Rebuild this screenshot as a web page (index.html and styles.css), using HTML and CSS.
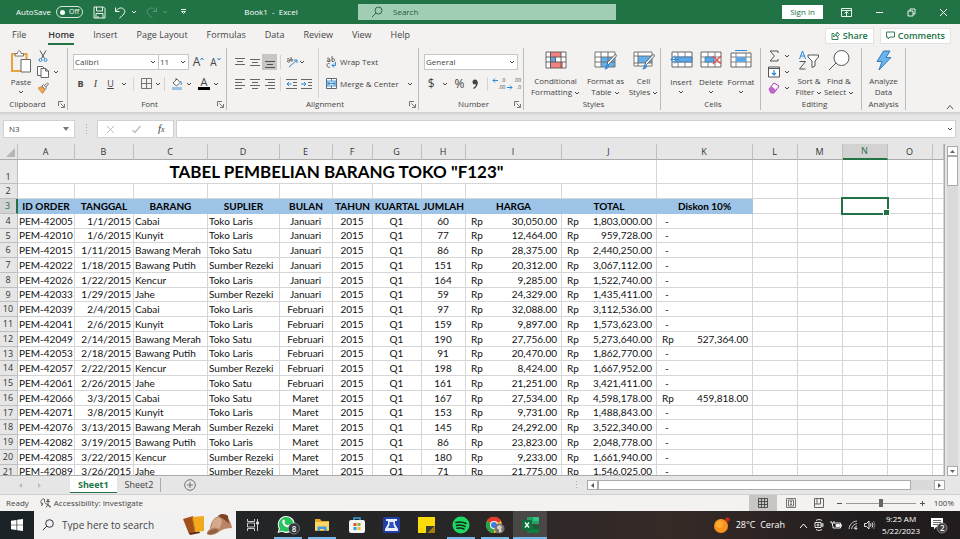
FILE: index.html
```html
<!DOCTYPE html>
<html lang="en">
<head>
<meta charset="utf-8">
<title>Book1 - Excel</title>
<link rel="stylesheet" href="styles.css">
</head>
<body>
<svg class="defs" aria-hidden="true">
  <symbol id="chev" viewBox="0 0 6 6"><path d="M1 2l2 2 2-2" fill="none" stroke="currentColor"/></symbol>
  <symbol id="launch" viewBox="0 0 7 7"><path d="M.5 5V.5H5M2.500 2.500L6 6M6.500 3v3.500H3" fill="none" stroke="#555" stroke-width=".8"/></symbol>
</svg>

<header class="titlebar">
  <div class="quick">
    <span class="autosave">AutoSave</span>
    <button class="toggle" aria-label="AutoSave off"><i></i>Off</button>
    <button class="q-save" aria-label="Save"><svg width="13" height="13" viewBox="0 0 13 13" fill="none" stroke="#fff" stroke-width=".9"><path d="M1 1h9.500L12 2.500V12H1zM3.500 1v4h6V1M3 12V7.500h7V12M5 10v2"/></svg></button>
    <button aria-label="Undo"><svg width="13" height="13" viewBox="0 0 13 13" fill="none" stroke="#fff"><path d="M1.500 1.500v4h4M1.500 5.500C4 2 7 1 9.500 3s1.500 5-4 9"/></svg></button>
    <svg class="c q-c"><use href="#chev"/></svg>
    <button class="dim" aria-label="Redo"><svg width="13" height="13" viewBox="0 0 13 13" fill="none" stroke="#fff"><path d="M11.500 1.500v4h-4M11.500 5.500C9 2 6 1 3.500 3S2 8 7.500 12"/></svg></button>
    <svg class="c dim"><use href="#chev"/></svg>
    <button class="q-more" aria-label="Customize"><svg width="7" height="6" viewBox="0 0 7 6" fill="none" stroke="#fff" stroke-width=".9"><path d="M1 .5h5M1.500 2.500l2 2 2-2z"/></svg></button>
    <h1>Book1&nbsp; -&nbsp; Excel</h1>
  </div>
  <label class="find"><svg width="12" height="12" viewBox="0 0 12 12" fill="none" stroke="#1e5c3a" stroke-width=".9"><circle cx="7.500" cy="4.500" r="3.500"/><path d="M5 7L1 11"/></svg><input type="text" placeholder="Search" aria-label="Search"></label>
  <div class="window">
    <button class="signin">Sign in</button>
    <button aria-label="Ribbon display"><svg width="11" height="9" viewBox="0 0 11 9" fill="none" stroke="#fff" stroke-width=".9"><path d="M.5.5h10v8H.5zM.5 2.500h10M5.500 8V4M3.500 5.500l2-2 2 2"/></svg></button>
    <button aria-label="Minimize"><svg width="9" height="9" viewBox="0 0 9 9" stroke="#fff"><path d="M1 4.500h7"/></svg></button>
    <button aria-label="Restore"><svg width="9" height="9" viewBox="0 0 9 9" fill="none" stroke="#fff" stroke-width=".9"><path d="M1 3h5v5H1zM3 3V1h5v5H6"/></svg></button>
    <button aria-label="Close"><svg width="9" height="9" viewBox="0 0 9 9" stroke="#fff"><path d="M1 1l7 7M8 1L1 8"/></svg></button>
  </div>
</header>

<nav class="tabs">
  <a href="#">File</a><a href="#" class="on">Home</a><a href="#">Insert</a><a href="#">Page Layout</a><a href="#">Formulas</a><a href="#">Data</a><a href="#">Review</a><a href="#">View</a><a href="#">Help</a>
  <button class="share"><svg width="9" height="9" viewBox="0 0 9 9" fill="none" stroke="#217346" stroke-width=".9"><path d="M3 2.500H1v6h6V6M2.500 6c0-2.500 1.500-3 3.500-3V1l2.500 2.500L6 6V4.500C4.500 4.500 3.500 4.500 2.500 6z"/></svg>Share</button>
  <button class="comments"><svg width="9" height="9" viewBox="0 0 9 9" fill="none" stroke="#217346" stroke-width=".9"><path d="M.5 1h8v5H4L2 8V6H.5z"/></svg>Comments</button>
</nav>

<section class="ribbon">
  <div class="group clip">
    <div class="body">
      <button class="big"><svg width="22" height="23" viewBox="0 0 22 23" fill="none"><path d="M5.500 4H2v17h9M14 4h2.500v5" stroke="#e8a33d" stroke-width="2"/><path d="M5 3.500h2.500C7.500 0 11 0 11 3.500h2.500V6H5z" fill="#fff" stroke="#666" stroke-width=".9"/><path d="M11 9.500h9.500V22H11z" fill="#fff" stroke="#666"/></svg><span>Paste</span><svg class="c"><use href="#chev"/></svg></button>
      <div class="stack">
        <button aria-label="Cut"><svg width="12" height="12" viewBox="0 0 12 12" fill="none"><path d="M3 .5l4.500 8M9 .5L4.500 8.500" stroke="#555"/><circle cx="3.500" cy="10" r="1.500" stroke="#2b88d8"/><circle cx="8.500" cy="10" r="1.500" stroke="#2b88d8"/></svg></button>
        <button aria-label="Copy"><svg width="12" height="12" viewBox="0 0 12 12" fill="#fff" stroke="#555" stroke-width=".9"><path d="M4 9.500H.5v-9h5L7 2M4 2.500h4.500L11.500 5v6.500H4zM8.500 2.500V5h3"/></svg><svg class="c"><use href="#chev"/></svg></button>
        <button aria-label="Format Painter"><svg width="12" height="12" viewBox="0 0 12 12"><path d="M1 6l4-1.500L8 8l-2.500 3.500z" fill="#f0a64a" stroke="#c97b1d" stroke-width=".7"/><path d="M5 4l1.500-1.500L9.500 6 8 7.500zM7.500 3.500L10.500 1l1 1-2.500 3" fill="#fff" stroke="#555" stroke-width=".8"/></svg></button>
      </div>
    </div>
    <h2>Clipboard</h2><svg class="l"><use href="#launch"/></svg>
  </div>

  <div class="group font">
    <div class="body rows">
      <div class="row">
        <span class="sel fname"><select aria-label="Font"><option>Calibri</option></select><svg class="c"><use href="#chev"/></svg></span><span class="sel fsize"><select aria-label="Font size"><option>11</option></select><svg class="c"><use href="#chev"/></svg></span>
        <button class="ib grow" aria-label="Increase font size">A<svg width="4" height="4" viewBox="0 0 4 4" fill="none" stroke="#2b88d8"><path d="M.5 3L2 1l1.500 2"/></svg></button>
        <button class="ib shrink" aria-label="Decrease font size">A<svg width="4" height="4" viewBox="0 0 4 4" fill="none" stroke="#2b88d8"><path d="M.5 1L2 3l1.500-2"/></svg></button>
      </div>
      <div class="row">
        <button class="ib"><b>B</b></button><button class="ib it"><i>I</i></button><button class="ib"><u>U</u></button><svg class="c m"><use href="#chev"/></svg><i class="sep"></i>
        <button class="ib w18" aria-label="Borders"><svg width="11" height="11" viewBox="0 0 11 11" fill="none" stroke="#666"><path d="M.5.5h10v10H.5zM5.500.5v10M.5 5.500h10" stroke-width=".9"/></svg></button><svg class="c"><use href="#chev"/></svg><i class="sep"></i>
        <button class="ib w18" aria-label="Fill"><svg width="12" height="12" viewBox="0 0 12 12"><path d="M1 9h10v3H1z" fill="#9dc3e6"/><path d="M2 5l4-4 3 3.500-3.500 3.500zM5 2V0" fill="#fff" stroke="#555" stroke-width=".9"/><path d="M9.500 3c1 1.500 1.500 3 0 4" stroke="#2b88d8" fill="none"/></svg></button><svg class="c"><use href="#chev"/></svg>
        <button class="ib w18 fc" aria-label="Font colour">A</button><svg class="c"><use href="#chev"/></svg>
      </div>
    </div>
    <h2>Font</h2><svg class="l"><use href="#launch"/></svg>
  </div>

  <div class="group align">
    <div class="body cols">
      <div class="rows">
        <div class="row">
          <button class="ib" aria-label="Top align"><svg width="10" height="12" viewBox="0 0 10 12" stroke="#555"><path d="M0 2.500h10M2 5.500h6M0 8.500h10" stroke-width=".9"/></svg></button><button class="ib" aria-label="Middle align"><svg width="10" height="12" viewBox="0 0 10 12" stroke="#555" stroke-width=".9"><path d="M0 3.500h10M2 6.500h6M0 9.500h10"/></svg></button><button class="ib pressed" aria-label="Bottom align"><svg width="10" height="12" viewBox="0 0 10 12" stroke="#444" stroke-width=".9"><path d="M0 5.500h10M2 8.500h6M0 11.500h10"/></svg></button><i class="sep"></i>
          <button class="ib" aria-label="Orientation"><svg width="12" height="12" viewBox="0 0 12 12" fill="none"><path d="M1 3c2-1 3 0 3 1.500S2 7 1.500 5.500 3 4 4 5M5 1v4c2 1 3-2 0-2" stroke="#555" stroke-width=".9"/><path d="M3 11l8-7M8 4h3v3" stroke="#2b88d8"/></svg></button><svg class="c"><use href="#chev"/></svg>
        </div>
        <div class="row">
          <button class="ib" aria-label="Align left"><svg width="10" height="10" viewBox="0 0 10 10" stroke="#555" stroke-width=".9"><path d="M0 .5h10M0 3.500h7M0 6.500h10M0 9.500h7"/></svg></button><button class="ib" aria-label="Centre"><svg width="10" height="10" viewBox="0 0 10 10" stroke="#555" stroke-width=".9"><path d="M0 .5h10M2 3.500h6M0 6.500h10M2 9.500h6"/></svg></button><button class="ib" aria-label="Align right"><svg width="10" height="10" viewBox="0 0 10 10" stroke="#555" stroke-width=".9"><path d="M0 .5h10M3 3.500h7M0 6.500h10M3 9.500h7"/></svg></button><i class="sep"></i>
          <button class="ib" aria-label="Decrease indent"><svg width="11" height="10" viewBox="0 0 11 10"><path d="M0 .5h11M7 3.500h4M7 6.500h4M0 9.500h11" stroke="#555" stroke-width=".9"/><path d="M5.500 5H1M3 3L1 5l2 2" stroke="#2b88d8" fill="none"/></svg></button><button class="ib" aria-label="Increase indent"><svg width="11" height="10" viewBox="0 0 11 10"><path d="M0 .5h11M7 3.500h4M7 6.500h4M0 9.500h11" stroke="#555" stroke-width=".9"/><path d="M0 5h5M3 3l2 2-2 2" stroke="#2b88d8" fill="none"/></svg></button>
        </div>
      </div>
      <i class="vsep"></i>
      <div class="rows">
        <div class="row"><button class="txt"><svg width="11" height="12" viewBox="0 0 11 12" fill="none"><path d="M1 2.500c2-1 3 0 3 3H2c-1.500 0-1.500-2 2-1.500M6 0v5.500c3.500 1 3.500-4 0-2.500M4 8C2 6.500 1 8 1 9.500S3 12 4 11" stroke="#555" stroke-width=".9"/><path d="M9.500 6v3.500H6M8 7.500l-2 2 2 2" stroke="#2b88d8"/></svg>Wrap Text</button></div>
        <div class="row"><button class="txt"><svg width="11" height="11" viewBox="0 0 11 11"><path d="M.5.5h10v10H.5z" fill="#fff" stroke="#555" stroke-width=".9"/><path d="M1 3h9v5H1z" fill="#cfe6f8" stroke="#2b88d8" stroke-width=".8"/><path d="M2 5.500h7M3.500 4L2 5.500 3.500 7M7.500 4L9 5.500 7.500 7M5.500 0v3M5.500 8v3" stroke="#2b6ea8" stroke-width=".8" fill="none"/></svg>Merge &amp; Center</button><svg class="c m2"><use href="#chev"/></svg></div>
      </div>
    </div>
    <h2>Alignment</h2><svg class="l"><use href="#launch"/></svg>
  </div>

  <div class="group number">
    <div class="body rows">
      <div class="row"><span class="sel fmt"><select aria-label="Number format"><option>General</option></select><svg class="c"><use href="#chev"/></svg></span></div>
      <div class="row">
        <button class="ib sym">$</button><svg class="c m"><use href="#chev"/></svg><button class="ib sym w18">%</button><button class="ib" aria-label="Comma style"><svg width="6" height="10" viewBox="0 0 6 10"><circle cx="3" cy="3" r="2.500" fill="#444"/><path d="M5 3c.5 3-1 5-3.500 6.500" stroke="#444" fill="none" stroke-width="1.300"/></svg></button><i class="sep"></i>
        <button class="ib dec" aria-label="Increase decimal"><span>.0</span><span>.00</span><svg width="6" height="5" viewBox="0 0 6 5" fill="none" stroke="#2b88d8"><path d="M6 2.500H1M3 .5l-2 2 2 2"/></svg></button><button class="ib dec r" aria-label="Decrease decimal"><span>.00</span><span>.0</span><svg width="6" height="5" viewBox="0 0 6 5" fill="none" stroke="#2b88d8"><path d="M0 2.500h5M3 .5l2 2-2 2"/></svg></button>
      </div>
    </div>
    <h2>Number</h2><svg class="l"><use href="#launch"/></svg>
  </div>

  <div class="group styles">
    <div class="body">
      <button class="big w54"><svg width="22" height="20" viewBox="0 0 22 20"><path d="M1 2h20v16H1z" fill="#fff"/><path d="M5 2h11v5H5zM5 12h13v6H5z" fill="#f4817e"/><path d="M5 7h5v5H5z" fill="#5ea7e5"/><path d="M1 2h20v16H1zM1 7h20M1 12h20M5.500 2v16M10.500 7v5M16 2v16" fill="none" stroke="#555" stroke-width=".9"/></svg><span>Conditional<br>Formatting <svg class="c"><use href="#chev"/></svg></span></button>
      <button class="big w42"><svg width="23" height="20" viewBox="0 0 23 20"><path d="M1 2h20v15H1z" fill="#fff"/><path d="M7 7h14v10H7z" fill="#62b0ec"/><path d="M1 2h20v15H1zM1 7h20M1 12h20M7 2v15M14 2v15" fill="none" stroke="#666" stroke-width=".9"/><path d="M21.500 4L13 13l1.500 1.500L22.500 6z" fill="#fff" stroke="#555" stroke-width=".9"/><path d="M10 19c2 0 1-4 3-5l2 1.500c.5 2-2 4.500-5 3.500z" fill="#3d8fd6"/></svg><span>Format as<br>Table <svg class="c"><use href="#chev"/></svg></span></button>
      <button class="big w30"><svg width="22" height="20" viewBox="0 0 22 20"><path d="M1 2h18v14H1z" fill="#fff"/><path d="M5 6h14v7H5z" fill="#62b0ec"/><path d="M1 2h18v14H1zM1 6h18M1 13h18M5 2v14" fill="none" stroke="#666" stroke-width=".9"/><path d="M20.500 4L12 13l1.500 1.500L21.500 6z" fill="#fff" stroke="#555" stroke-width=".9"/><path d="M9 19c2 0 1-4 3-5l2 1.500c.5 2-2 4.500-5 3.500z" fill="#3d8fd6"/></svg><span>Cell<br>Styles <svg class="c"><use href="#chev"/></svg></span></button>
    </div>
    <h2>Styles</h2>
  </div>

  <div class="group cells">
    <div class="body">
      <button class="big w30"><svg width="23" height="20" viewBox="0 0 23 20"><path d="M2 2h20v15H2z" fill="#fff" stroke="#555" stroke-width=".9"/><path d="M2 7h20M2 12h20M8 2v15M15 2v15" stroke="#777" stroke-width=".9"/><path d="M5 7h17v5H5z" fill="#5ea7e5" stroke="#2b6ea8" stroke-width=".7"/><path d="M1 9.500h8M5 5.500l-4 4 4 4" stroke="#2b88d8" fill="none"/></svg><span>Insert</span><svg class="c"><use href="#chev"/></svg></button>
      <button class="big w30"><svg width="23" height="20" viewBox="0 0 23 20"><path d="M1 2h20v15H1z" fill="#fff" stroke="#555" stroke-width=".9"/><path d="M1 7h20M1 12h20M8 2v15M15 2v15" stroke="#777" stroke-width=".9"/><path d="M5 7h9v5H5z" fill="#5ea7e5" stroke="#2b6ea8" stroke-width=".7"/><path d="M13 6l8 8M21 6l-8 8" stroke="#e8504c" stroke-width="1.300"/></svg><span>Delete</span><svg class="c"><use href="#chev"/></svg></button>
      <button class="big w30"><svg width="22" height="20" viewBox="0 0 22 20"><path d="M1 3h20v14H1z" fill="#fff" stroke="#555" stroke-width=".9"/><path d="M1 7h20M1 12h20M6 3v14M16 3v14" stroke="#777" stroke-width=".9"/><path d="M6 7h10v5H6z" fill="#5ea7e5"/><path d="M5 .5h12" stroke="#2b88d8"/></svg><span>Format</span><svg class="c"><use href="#chev"/></svg></button>
    </div>
    <h2>Cells</h2>
  </div>

  <div class="group editing">
    <div class="body">
      <div class="stack">
        <button aria-label="AutoSum"><svg width="12" height="12" viewBox="0 0 12 12" fill="none" stroke="#555"><path d="M10 3V1H2l4.500 5L2 11h8V9"/></svg><svg class="c"><use href="#chev"/></svg></button>
        <button aria-label="Fill down"><svg width="12" height="12" viewBox="0 0 12 12" fill="none"><path d="M.5 1h11v10H.5z" fill="#fff" stroke="#555"/><path d="M1 2.500h10" stroke="#555"/><path d="M6 4v5M4 7l2 2 2-2" stroke="#2b88d8" stroke-width="1.200"/></svg><svg class="c"><use href="#chev"/></svg></button>
        <button aria-label="Clear"><svg width="12" height="12" viewBox="0 0 12 12"><path d="M1 7l5-6 5 3-5 7H3z" fill="#fff" stroke="#a63bb5"/><path d="M1 7l2.500-3L8 8l-2 3H3z" fill="#c266cf"/></svg><svg class="c"><use href="#chev"/></svg></button>
      </div>
      <button class="big w30"><svg width="22" height="20" viewBox="0 0 22 20" fill="none"><path d="M1.500 9L4.500 1l3 8M2.500 6h4" stroke="#2b88d8"/><path d="M1.500 11.500h6l-6 7.500h6" stroke="#555"/><path d="M10 5h10.500v2L17 11v5l-3 1.500V11l-4-4z" fill="#fff" stroke="#555"/></svg><span>Sort &amp;<br>Filter <svg class="c"><use href="#chev"/></svg></span></button>
      <button class="big w30"><svg width="22" height="22" viewBox="0 0 22 22" fill="none" stroke="#555"><circle cx="13.500" cy="8" r="7.500" fill="#fff"/><path d="M8 13l-7 7"/></svg><span>Find &amp;<br>Select <svg class="c"><use href="#chev"/></svg></span></button>
    </div>
    <h2>Editing</h2>
  </div>

  <div class="group analysis">
    <div class="body"><button class="big w42"><svg width="16" height="21" viewBox="0 0 16 21"><path d="M7.500 1H14l-4 6.500h5L3 20l3-8.500H1z" fill="#6bb4ee" stroke="#2671b8" stroke-width=".9"/></svg><span>Analyze<br>Data</span></button></div>
    <h2>Analysis</h2>
  </div>
  <button class="collapse" aria-label="Collapse ribbon"><svg width="8" height="6" viewBox="0 0 8 6" fill="none" stroke="#555"><path d="M1 5l3-3.500L7 5"/></svg></button>
</section>

<section class="formula">
  <span class="namebox"><input type="text" value="N3" aria-label="Name box"><svg width="6" height="4" viewBox="0 0 6 4"><path d="M0 0h6L3 4z" fill="#777"/></svg></span>
  <svg class="dots" width="3" height="10" viewBox="0 0 3 10" fill="#aaa"><path d="M1 0h1v1H1zM1 3h1v1H1zM1 6h1v1H1zM1 9h1v1H1z"/></svg>
  <div class="fx">
    <button aria-label="Cancel"><svg width="9" height="9" viewBox="0 0 9 9" stroke="#bbb"><path d="M1 1l7 7M8 1L1 8"/></svg></button>
    <button aria-label="Enter"><svg width="9" height="9" viewBox="0 0 9 9" stroke="#bbb" fill="none" stroke-width="1.300"><path d="M.5 5L3 7.500 8.500 1"/></svg></button>
    <button aria-label="Insert function"><i>f<small>x</small></i></button>
  </div>
  <span class="entry"><input type="text" aria-label="Formula"><svg class="c"><use href="#chev"/></svg></span>
</section>

<main class="work">
<div class="grid">
<table>
<colgroup><col class="cr"><col class="ca"><col class="cb"><col class="cc"><col class="cd"><col class="ce"><col class="cf"><col class="cg"><col class="ch"><col class="ci"><col class="cj"><col class="ck"><col class="cl"><col class="cl"><col class="cl"><col class="cl"><col></colgroup>
<thead><tr><th class="corner"><svg width="9" height="9" viewBox="0 0 9 9"><path d="M9 0v9H0z" fill="#b5b5b5"/></svg></th><th>A<th>B<th>C<th>D<th>E<th>F<th>G<th>H<th>I<th>J<th>K<th>L<th>M<th class="on">N<th>O<th></tr></thead>
<tbody>
<tr class="title"><th>1<td colspan="10">TABEL PEMBELIAN BARANG TOKO "F123"<td><td><td><td><td><td></tr>
<tr><th>2<td><td><td><td><td><td><td><td><td><td><td><td><td><td><td><td></tr>
<tr class="head"><th>3<td>ID ORDER<td>TANGGAL<td>BARANG<td>SUPLIER<td>BULAN<td>TAHUN<td>KUARTAL<td>JUMLAH<td>HARGA<td>TOTAL<td>Diskon 10%<td><td><td class="cursor"><td><td></tr>
<tr><th>4<td>PEM-42005<td>1/1/2015<td>Cabai<td>Toko Laris<td>Januari<td>2015<td>Q1<td>60<td><p>Rp<span>30,050.00</span></p><td><p>Rp<span>1,803,000.00</span></p><td><p class="nil">-</p><td><td><td><td><td></tr>
<tr><th>5<td>PEM-42010<td>1/6/2015<td>Kunyit<td>Toko Laris<td>Januari<td>2015<td>Q1<td>77<td><p>Rp<span>12,464.00</span></p><td><p>Rp<span>959,728.00</span></p><td><p class="nil">-</p><td><td><td><td><td></tr>
<tr><th>6<td>PEM-42015<td>1/11/2015<td>Bawang Merah<td>Toko Satu<td>Januari<td>2015<td>Q1<td>86<td><p>Rp<span>28,375.00</span></p><td><p>Rp<span>2,440,250.00</span></p><td><p class="nil">-</p><td><td><td><td><td></tr>
<tr><th>7<td>PEM-42022<td>1/18/2015<td>Bawang Putih<td>Sumber Rezeki<td>Januari<td>2015<td>Q1<td>151<td><p>Rp<span>20,312.00</span></p><td><p>Rp<span>3,067,112.00</span></p><td><p class="nil">-</p><td><td><td><td><td></tr>
<tr><th>8<td>PEM-42026<td>1/22/2015<td>Kencur<td>Toko Laris<td>Januari<td>2015<td>Q1<td>164<td><p>Rp<span>9,285.00</span></p><td><p>Rp<span>1,522,740.00</span></p><td><p class="nil">-</p><td><td><td><td><td></tr>
<tr><th>9<td>PEM-42033<td>1/29/2015<td>Jahe<td>Sumber Rezeki<td>Januari<td>2015<td>Q1<td>59<td><p>Rp<span>24,329.00</span></p><td><p>Rp<span>1,435,411.00</span></p><td><p class="nil">-</p><td><td><td><td><td></tr>
<tr><th>10<td>PEM-42039<td>2/4/2015<td>Cabai<td>Toko Laris<td>Februari<td>2015<td>Q1<td>97<td><p>Rp<span>32,088.00</span></p><td><p>Rp<span>3,112,536.00</span></p><td><p class="nil">-</p><td><td><td><td><td></tr>
<tr><th>11<td>PEM-42041<td>2/6/2015<td>Kunyit<td>Toko Laris<td>Februari<td>2015<td>Q1<td>159<td><p>Rp<span>9,897.00</span></p><td><p>Rp<span>1,573,623.00</span></p><td><p class="nil">-</p><td><td><td><td><td></tr>
<tr><th>12<td>PEM-42049<td>2/14/2015<td>Bawang Merah<td>Toko Satu<td>Februari<td>2015<td>Q1<td>190<td><p>Rp<span>27,756.00</span></p><td><p>Rp<span>5,273,640.00</span></p><td><p>Rp<span>527,364.00</span></p><td><td><td><td><td></tr>
<tr><th>13<td>PEM-42053<td>2/18/2015<td>Bawang Putih<td>Toko Laris<td>Februari<td>2015<td>Q1<td>91<td><p>Rp<span>20,470.00</span></p><td><p>Rp<span>1,862,770.00</span></p><td><p class="nil">-</p><td><td><td><td><td></tr>
<tr><th>14<td>PEM-42057<td>2/22/2015<td>Kencur<td>Sumber Rezeki<td>Februari<td>2015<td>Q1<td>198<td><p>Rp<span>8,424.00</span></p><td><p>Rp<span>1,667,952.00</span></p><td><p class="nil">-</p><td><td><td><td><td></tr>
<tr><th>15<td>PEM-42061<td>2/26/2015<td>Jahe<td>Toko Satu<td>Februari<td>2015<td>Q1<td>161<td><p>Rp<span>21,251.00</span></p><td><p>Rp<span>3,421,411.00</span></p><td><p class="nil">-</p><td><td><td><td><td></tr>
<tr><th>16<td>PEM-42066<td>3/3/2015<td>Cabai<td>Toko Satu<td>Maret<td>2015<td>Q1<td>167<td><p>Rp<span>27,534.00</span></p><td><p>Rp<span>4,598,178.00</span></p><td><p>Rp<span>459,818.00</span></p><td><td><td><td><td></tr>
<tr><th>17<td>PEM-42071<td>3/8/2015<td>Kunyit<td>Toko Laris<td>Maret<td>2015<td>Q1<td>153<td><p>Rp<span>9,731.00</span></p><td><p>Rp<span>1,488,843.00</span></p><td><p class="nil">-</p><td><td><td><td><td></tr>
<tr><th>18<td>PEM-42076<td>3/13/2015<td>Bawang Merah<td>Sumber Rezeki<td>Maret<td>2015<td>Q1<td>145<td><p>Rp<span>24,292.00</span></p><td><p>Rp<span>3,522,340.00</span></p><td><p class="nil">-</p><td><td><td><td><td></tr>
<tr><th>19<td>PEM-42082<td>3/19/2015<td>Bawang Putih<td>Toko Laris<td>Maret<td>2015<td>Q1<td>86<td><p>Rp<span>23,823.00</span></p><td><p>Rp<span>2,048,778.00</span></p><td><p class="nil">-</p><td><td><td><td><td></tr>
<tr><th>20<td>PEM-42085<td>3/22/2015<td>Kencur<td>Sumber Rezeki<td>Maret<td>2015<td>Q1<td>180<td><p>Rp<span>9,233.00</span></p><td><p>Rp<span>1,661,940.00</span></p><td><p class="nil">-</p><td><td><td><td><td></tr>
<tr><th>21<td>PEM-42089<td>3/26/2015<td>Jahe<td>Sumber Rezeki<td>Maret<td>2015<td>Q1<td>71<td><p>Rp<span>21,775.00</span></p><td><p>Rp<span>1,546,025.00</span></p><td><p class="nil">-</p><td><td><td><td><td></tr>
</tbody>
</table>
</div>
<div class="vscroll">
  <button aria-label="Scroll up"><svg width="5" height="3" viewBox="0 0 5 3"><path d="M0 3h5L2.500 0z" fill="#666"/></svg></button>
  <div class="track"><i></i></div>
  <button aria-label="Scroll down"><svg width="5" height="3" viewBox="0 0 5 3"><path d="M0 0h5L2.500 3z" fill="#666"/></svg></button>
</div>
</main>

<nav class="sheets">
  <button class="arr" aria-label="Previous sheet"><svg width="3" height="5" viewBox="0 0 3 5"><path d="M3 0v5L0 2.500z" fill="#bbb"/></svg></button>
  <button class="arr" aria-label="Next sheet"><svg width="3" height="5" viewBox="0 0 3 5"><path d="M0 0v5l3-2.500z" fill="#bbb"/></svg></button>
  <a href="#" class="on">Sheet1</a><a href="#" class="off">Sheet2</a><i class="sep"></i>
  <button class="add" aria-label="New sheet"><svg width="12" height="12" viewBox="0 0 12 12" fill="none" stroke="#666" stroke-width=".9"><circle cx="6" cy="6" r="5.300"/><path d="M6 3v6M3 6h6"/></svg></button>
  <svg class="dots" width="3" height="10" viewBox="0 0 3 10" fill="#aaa"><path d="M1 1h1v1H1zM1 4h1v1H1zM1 7h1v1H1z"/></svg>
  <div class="hscroll">
    <button aria-label="Scroll left"><svg width="3" height="5" viewBox="0 0 3 5"><path d="M3 0v5L0 2.500z" fill="#555"/></svg></button>
    <div class="track"><i></i></div>
    <button aria-label="Scroll right"><svg width="3" height="5" viewBox="0 0 3 5"><path d="M0 0v5l3-2.500z" fill="#555"/></svg></button>
  </div>
</nav>

<footer class="status">
  <span class="ready">Ready</span>
  <svg width="11" height="10" viewBox="0 0 11 10" fill="none" stroke="#555" stroke-width=".9"><path d="M4 .5C1.500 1 .5 3 1 5l1.500 2M1 7.500l1.500-.5V5M4.500 1v3.500M6 3.500h4M8 3.500v3L6 9.500M8 6.500l2 3M5 5l6 4"/><circle cx="8" cy="2" r=".8"/></svg>
  <span>Accessibility: Investigate</span>
  <div class="views">
    <button class="pressed" aria-label="Normal"><svg width="10" height="10" viewBox="0 0 10 10" fill="none" stroke="#444" stroke-width=".9"><path d="M.5.5h9v9h-9zM3.500.5v9M6.500.5v9M.5 3.500h9M.5 6.500h9"/></svg></button>
    <button aria-label="Page layout"><svg width="10" height="10" viewBox="0 0 10 10" fill="none" stroke="#555" stroke-width=".8"><path d="M.5.5h9v9h-9zM2.500 2h5v6h-5zM4 3.500h2M4 5h2M4 6.500h2"/></svg></button>
    <button aria-label="Page break preview"><svg width="10" height="10" viewBox="0 0 10 10" fill="none" stroke="#555" stroke-width=".9"><path d="M.5.5h9v9h-9zM3 .5V6h3.500V.5M.5 6H3"/></svg></button>
  </div>
  <button class="step" aria-label="Zoom out"><svg width="7" height="7" viewBox="0 0 7 7" stroke="#555"><path d="M1 3.500h5"/></svg></button>
  <input type="range" aria-label="Zoom" value="50">
  <button class="step" aria-label="Zoom in"><svg width="7" height="7" viewBox="0 0 7 7" stroke="#555"><path d="M1 3.500h5M3.500 1v5"/></svg></button>
  <span class="pct">100%</span>
</footer>

<footer class="taskbar">
  <button class="start" aria-label="Start"><svg width="12" height="12" viewBox="0 0 12 12" fill="#fff"><path d="M0 1.700l5.500-.8v4.800H0zM6.200.8L12 0v5.700H6.200zM0 6.300h5.500v4.800L0 10.300zM6.200 6.300H12V12l-5.800-.8z"/></svg></button>
  <label class="tsearch"><svg width="12" height="12" viewBox="0 0 12 12" fill="none" stroke="#333"><circle cx="7.500" cy="4.500" r="3.800"/><path d="M4.800 7.200L.8 11.200"/></svg><input type="text" placeholder="Type here to search" aria-label="Type here to search">
    <svg width="52" height="24" viewBox="0 0 52 24"><path d="M1 6l10-3 5 14-9 4z" fill="#a3501b"/><path d="M7 20l10-2 1 2-10 2z" fill="#5c2c10"/><path d="M10 4l12-1v15l-9 1z" fill="#f2a91e"/><path d="M10 4l3 15" stroke="#b96a12"/><path d="M28 16C29 7 34 2 41 3c6 1 8 6 9 12-5 0-9 1-12 3-4 4-11 5-13 3 0-2 1-4 3-5z" fill="#b98566"/><path d="M36 3c3-3 8-2 10 0l1 8c-3-4-6-5-11-8z" fill="#7d4526"/><path d="M31 8c3-4 8-5 9 0-1 5-2 7-3 8-3-2-5-2-8 0z" fill="#d5a98b"/><path d="M25 20c4-4 8-5 12-3-3 4-9 6-12 3z" fill="#93603f"/></svg>
  </label>
  <div class="apps">
    <button aria-label="Task view"><svg width="12" height="12" viewBox="0 0 12 12" fill="none" stroke="#ddd" stroke-width=".9"><path d="M.5 0v2.500h7V0M.5 4h7v4h-7zM.5 12V9.500h7V12M10.500 0v12"/><path d="M9.500 3h2v2h-2z" fill="#ddd"/></svg></button>
    <button class="run" aria-label="WhatsApp"><svg width="24" height="22" viewBox="0 0 24 22"><path d="M1.500 19l1.300-4.500A8.500 8.500 0 1 1 6 17.800z" fill="#fff"/><path d="M3 17.600l.9-3.300A7.400 7.400 0 1 1 6.500 16.800z" fill="#28c35a"/><path d="M7 6c1-1 1.500 0 2 1.300.2.700-.8 1-.6 1.500.7 1.300 1.700 2.200 3 2.700.6 0 .8-1.200 1.500-1 1.300.6 2 .8 1.200 2-2 2.200-7-.5-7.800-4-.2-1 .2-2 .7-2.500z" fill="#fff"/><circle cx="18" cy="14.500" r="5.500" fill="#30353a" stroke="#999" stroke-width=".7"/></svg><em>8</em></button>
    <button class="run" aria-label="File Explorer"><svg width="16" height="14" viewBox="0 0 16 14"><path d="M1 1h5l1.500 2H15v10H1z" fill="#e8a82c"/><path d="M1 4h14v8H1z" fill="#fcd667"/><path d="M3.500 13V8.500h9V13h-2.500v-2H6v2z" fill="#3f9bdc"/></svg></button>
    <button aria-label="Microsoft Store"><svg width="18" height="18" viewBox="0 0 18 18"><path d="M6 5V2h6v3" fill="none" stroke="#3aa0e0" stroke-width="1.500"/><rect x="1" y="4" width="16" height="13" rx="2" fill="#f3f3f3"/><path d="M5.500 7h3v3h-3z" fill="#e74f2c"/><path d="M9.500 7h3v3h-3z" fill="#7db52b"/><path d="M5.500 11h3v3h-3z" fill="#2a9fdc"/><path d="M9.500 11h3v3h-3z" fill="#f5b81c"/></svg></button>
    <button aria-label="Scanner"><svg width="17" height="16" viewBox="0 0 17 16"><rect width="17" height="16" rx="2" fill="#2340a8"/><path d="M3 2h11v2h-2v3l3 5v2H2v-2l3-5V4H3z" fill="#e8edfa"/><path d="M6.500 5h4v3l1.500 3h-7l1.500-3z" fill="#2c52c0"/></svg></button>
    <button aria-label="Sticky Notes"><svg width="17" height="16" viewBox="0 0 17 16"><path d="M0 0h17v16H0z" fill="#fddb0a"/><path d="M8 9h9l-7 7H8z" fill="#3b3a35"/><path d="M17 9v7h-7z" fill="#a37f08"/></svg></button>
    <button class="run" aria-label="Spotify"><svg width="18" height="18" viewBox="0 0 18 18"><circle cx="9" cy="9" r="8.500" fill="#1ed760"/><path d="M4 6.500c4-1 7-.7 10 1M4.500 9.500c3-.8 6-.5 8.500 1M5 12.300c2.500-.6 4.800-.4 7 .8" fill="none" stroke="#17231b" stroke-width="1.500" stroke-linecap="round"/></svg></button>
    <button class="run" aria-label="Chrome"><svg width="20" height="18" viewBox="0 0 20 18"><circle cx="9" cy="9" r="8" fill="#fbc116"/><path d="M9 9L2 5a8 8 0 0 1 14 0z" fill="#e33b2e"/><path d="M9 9L9 17A8 8 0 0 1 2 5z" fill="#2aa14b"/><circle cx="9" cy="9" r="4" fill="#fff"/><circle cx="9" cy="9" r="3" fill="#3b7de0"/><circle cx="14.500" cy="12.500" r="5" fill="#77736f"/><path d="M12 10.500l3-1.500 2 2-1 2 1 2.500-3 1v-3l-2-1z" fill="#d8d2cb"/></svg></button>
    <button class="run active" aria-label="Excel"><svg width="17" height="16" viewBox="0 0 17 16"><path d="M5 0h11q1 0 1 1v6H5z" fill="#21a366"/><path d="M11 0h5q1 0 1 1v3h-6z" fill="#33c481"/><path d="M5 8h12v7q0 1-1 1H5z" fill="#107c41"/><path d="M11 8h6v4h-6z" fill="#185c37"/><rect y="3" width="10" height="10" rx="1" fill="#0f703b"/><path d="M3 5.500l4 5M7 5.500l-4 5" stroke="#fff" stroke-width="1.300"/></svg></button>
  </div>
  <div class="tray">
    <svg width="16" height="16" viewBox="0 0 16 16"><circle cx="7" cy="9" r="7" fill="#f7931e"/><circle cx="5.500" cy="7.500" r="3.500" fill="#fbab33"/><circle cx="13.500" cy="2.500" r="2.200" fill="#c42b1c"/></svg>
    <span class="weather">28°C&nbsp; Cerah</span>
    <svg width="9" height="7" viewBox="0 0 9 7" fill="none" stroke="#fff"><path d="M1 6l3.500-4L8 6"/></svg>
    <svg width="10" height="12" viewBox="0 0 10 12" fill="none" stroke="#fff" stroke-width=".9"><path d="M2 1.500C4 .3 6 .3 8 1.500M2 10.500c2 1.200 4 1.200 6 0M1 3.500h6v5H1zM7 5.500l2-1v3l-2-1"/><circle cx="4" cy="6" r="1"/></svg>
    <svg width="12" height="10" viewBox="0 0 12 10" fill="none" stroke="#fff" stroke-width=".9"><path d="M4 3h6.500v5H3V6M11.500 4.500v2M1 1v2h3V1M2.500 3v3"/><path d="M6 4.500h3.500v2H6z" fill="#fff"/></svg>
    <svg width="10" height="10" viewBox="0 0 10 10" fill="none" stroke="#ddd" stroke-width=".9"><path d="M1 9C1.500 4.500 4.500 1.500 9 1M3.500 9C4 6 6 4 9 3.500M6 9c.3-1.500 1.500-2.700 3-3"/><circle cx="8" cy="8.500" r=".8" fill="#fff"/></svg>
    <svg width="12" height="10" viewBox="0 0 12 10" fill="none" stroke="#fff" stroke-width=".9"><path d="M.5 3.500h2L5 1v8L2.500 6.500h-2zM6.500 3.500q1 1.500 0 3M8 2.500q2 2.500 0 5"/><path d="M9.500 1q3 4 0 8" stroke="#888"/></svg>
    <time>9:25 AM<br>5/22/2023</time>
    <button class="notif" aria-label="Notifications"><svg width="18" height="17" viewBox="0 0 18 17"><path d="M1 1h12v9H6l-2 2.500V10H1z" fill="#fff"/><path d="M3 3.500h8M3 5.500h8M3 7.500h5" stroke="#444" stroke-width=".8"/><circle cx="12" cy="11" r="5" fill="#403b3a" stroke="#aaa" stroke-width=".7"/></svg><em>2</em></button>
  </div>
</footer>
</body>
</html>
```

FILE: styles.css
```css
* { box-sizing: border-box; }
body { margin: 0; height: 100vh; display: flex; flex-direction: column; overflow: hidden; background: #e6e6e6; color: #444; font: 9px/12px "Open Sans", "Noto Sans", sans-serif; }
button, input, select { font: inherit; color: inherit; border: 0; padding: 0; margin: 0; background: none; outline: 0; border-radius: 0; }
a { color: inherit; text-decoration: none; }
button { display: flex; align-items: center; justify-content: center; white-space: nowrap; }
svg { display: block; flex: none; }
h1, h2, p { margin: 0; font-weight: 400; font-size: inherit; }
.defs { position: absolute; width: 0; height: 0; }
.c { width: 6px; height: 6px; }

/* title bar */
.titlebar { flex: none; height: 24px; display: flex; align-items: center; background: #217346; color: #fff; }
.quick { flex: 0 0 358px; display: flex; align-items: center; padding-left: 16px; font-size: 8px; }
.toggle { width: 27px; height: 12px; margin: 0 10px 0 5px; border: 1px solid #d5e6dc; border-radius: 6px; font-size: 7px; gap: 4px; justify-content: flex-start; padding-left: 3px; }
.toggle i { width: 5px; height: 5px; border-radius: 50%; background: #fff; }
.q-save { margin-right: 8px; }
.q-c { margin: 0 8px 0 4px; }
.dim { opacity: .25; }
.q-more { margin-left: 12px; }
.quick .dim + .dim { margin-left: 4px; }
h1 { flex: 1; padding-right: 3px; text-align: center; }
.find { flex: 0 1 258px; height: 16px; display: flex; align-items: center; gap: 10px; padding-left: 13px; background: #a0cdb4; color: #1e5c3a; font-size: 8px; }
.find input { flex: 1; min-width: 0; }
input::placeholder { color: inherit; opacity: 1; }
.window { margin-left: auto; display: flex; align-items: center; gap: 23px; padding-right: 12px; }
.signin { width: 41px; height: 14px; background: #fff; color: #217346; font-size: 8px; margin-right: -5px; }

/* tabs */
.tabs { flex: none; height: 23px; display: flex; align-items: center; gap: 19px; padding: 0 9px 0 12px; background: #f3f2f1; }
.tabs a { line-height: 17px; border-bottom: 2px solid transparent; }
.tabs .on { color: #333; font-weight: 600; border-color: #217346; margin-left: 3px; }
.tabs button { height: 16px; padding: 0 5px; gap: 3px; background: #fff; border: 1px solid #e3e2e1; color: #217346; font-weight: 600; }
.share { margin-left: auto; }
.comments { margin-left: -13px; }

/* ribbon */
.ribbon { flex: none; height: 66px; display: flex; background: #f3f2f1; border-bottom: 1px solid #d2d0ce; box-shadow: 0 1px 2px #d0d0d0; padding-top: 1px; margin-bottom: 7px; font-size: 8px; }
.group { position: relative; flex: none; height: 62px; display: flex; flex-direction: column; border-right: 1px solid #bdbbb9; }
.group h2 { line-height: 12px; text-align: center; margin-top: auto; }
.l { position: absolute; right: 2px; bottom: 2px; width: 7px; height: 7px; }
.body { display: flex; height: 50px; }
.clip { width: 68px; }
.clip h2 { padding-right: 12px; }
.font { width: 159px; padding-left: 5px; }
.align { width: 192px; padding-left: 5px; }
.number { width: 105px; padding-left: 5px; }
.styles { width: 137px; padding-left: 3px; }
.cells { width: 100px; padding-left: 5px; }
.editing { width: 101px; padding-left: 7px; }
.analysis { width: 44px; }
.big { flex-direction: column; justify-content: flex-start; padding-top: 2px; line-height: 11px; }
.big > svg:first-child { margin-bottom: auto; }
.big > span { height: 11px; margin-bottom: 12px; }
.big > span + .c { margin: -10px 0 3px; }
.big span .c { display: inline-block; vertical-align: middle; }
.clip .big { margin-left: 9px; width: 24px; }
.clip .stack { margin-left: 4px; }
.w54 { width: 57px; }
.w42 { width: 43px; }
.styles .w30 { width: 33px; }
.w30 { width: 30px; }
.stack { display: flex; flex-direction: column; justify-content: space-between; padding: 1px 0 3px; width: 26px; }
.stack button { width: max-content; height: 14px; gap: 4px; }
.rows { display: flex; flex-direction: column; gap: 5px; padding-top: 5px; }
.row { display: flex; align-items: center; height: 17px; }
.body.rows { height: 50px; }
.cols { gap: 3px; }
.vsep { width: 1px; height: 50px; background: #d5d3d1; margin: 0 4px 0 1px; }
.sep { width: 1px; height: 14px; background: #d5d3d1; margin: 0 3px; }
.ib { width: 15px; height: 16px; font-size: 9px; }
.w18 { width: 18px; }
.m { margin: 0 3px; }
.m2 { margin-left: 8px; }
.pressed { background: #c8c6c4; }
.sel { position: relative; height: 16px; border: 1px solid #c8c6c4; background: #fff; }
.sel select { appearance: none; width: 100%; height: 14px; padding-left: 1px; }
.sel .c { position: absolute; right: 2px; top: 4px; pointer-events: none; }
.fname { width: 86px; }
.fsize { width: 31px; margin-left: -1px; }
.grow { font-size: 12px; margin-left: 2px; }
.shrink { font-size: 10px; margin-left: 2px; }
.grow svg, .shrink svg { margin-bottom: 6px; }
.it { font-family: "Liberation Serif", serif; font-size: 10px; }
.fc { height: 13px; flex: none; width: 12px; margin: 0 3px 0 6px; border-bottom: 3px solid #000; font-size: 11px; line-height: 10px; }
.txt { gap: 3px; }
.fmt { width: 94px; }
.sym { font-size: 12px; }
.number .row .sep { margin: 0 4px; }
.dec { position: relative; flex-direction: column; align-items: flex-end; width: 16px; padding-right: 2px; font-size: 5px; line-height: 7px; }
.dec svg { position: absolute; left: 0; top: 2px; }
.dec.r svg { top: 9px; }
.collapse { margin: auto 6px 2px auto; }

/* formula bar */
.formula { flex: none; display: flex; align-items: center; height: 18px; padding: 0 4px 0 3px; }
.namebox, .fx, .entry { height: 18px; display: flex; align-items: center; background: #fff; border: 1px solid #d0d0d0; }
.namebox { width: 72px; padding: 0 5px; }
.namebox input { width: 100%; font-size: 8px; }
.formula .dots { margin: 0 9px 0 10px; }
.fx { width: 77px; justify-content: space-around; }
.fx i { font: italic 11px/12px "Liberation Serif", serif; }
.fx small { font-size: 8px; }
.entry { flex: 1; margin-left: 2px; padding-right: 2px; }
.entry input { flex: 1; }

/* worksheet */
.work { flex: 1; min-height: 0; display: flex; margin-top: 6px; }
.grid { flex: 1; min-width: 0; overflow: hidden; background: #fff; border-right: 1px solid #ababab; border-bottom: 1px solid #ababab; }
table { width: 100%; table-layout: fixed; border-spacing: 0; font: 10px/14px Lato, "Open Sans", sans-serif; color: #111; }
.cr { width: 18px; } .ca { width: 57px; } .cb { width: 59px; } .cc { width: 74px; } .cd { width: 72px; } .ce { width: 53px; } .cf { width: 40px; } .cg { width: 49px; } .ch { width: 44px; } .ci { width: 96px; } .cj { width: 95px; } .ck { width: 96px; } .cl { width: 45px; }
th, td { padding: 0 2px 0 1px; height: 15px; border-right: 1px solid #d6d6d6; border-bottom: 1px solid #d6d6d6; white-space: nowrap; }
th { background: #e6e6e6; color: #333; font: 9px/14px "Open Sans", sans-serif; border-color: #bfbfbf; }
thead th { border-bottom-color: #ababab; height: 16px; }
thead .on { background: #d2d2d2; color: #217346; border-bottom: 2px solid #217346; }
.corner { padding: 0 2px 2px; vertical-align: bottom; }
.corner svg { margin-left: auto; }
tbody tr:nth-child(4n + 5) > * { height: 14px; line-height: 13px; }
tbody .title > * { height: 24px; line-height: 22px; }
tbody .title th { line-height: 13px; vertical-align: bottom; }
.title td[colspan] { font-size: 17px; font-weight: 700; text-align: center; color: #000; }
.head td { font-weight: 700; text-align: center; color: #000; }
.head td:nth-child(-n + 12) { background: #9dc3e6; border-color: #9dc3e6; padding: 0; }
.head th { background: #d2d2d2; color: #217346; border-right: 2px solid #217346; }
.cursor { position: relative; }
.cursor::before { content: ""; position: absolute; inset: -2px; border: 2px solid #217346; }
.cursor::after { content: ""; position: absolute; right: -3px; bottom: -3px; width: 5px; height: 5px; background: #217346; border: 1px solid #fff; }
tr:not(.title):not(.head) td:nth-child(3) { text-align: right; }
tr:not(.title):not(.head) td:nth-child(n + 6):nth-child(-n + 9) { text-align: center; }
td p { display: flex; justify-content: space-between; padding: 0 2px 0 4px; }
td .nil { padding-left: 7px; }
.vscroll { width: 15px; padding: 2px 2px 0; display: flex; flex-direction: column; }
.vscroll button { height: 10px; background: #fff; border: 1px solid #ababab; }
.track { flex: 1; background: #dadada; }
.track i { display: block; background: #fff; border: 1px solid #ababab; }
.vscroll i { height: 30px; }

/* sheet tabs */
.sheets { flex: none; height: 19px; display: flex; align-items: center; padding-right: 15px; border-bottom: 1px solid #d0d0d0; }
.arr { width: 19px; }
.arr:first-child { margin-left: 11px; }
.sheets a { height: 17px; align-self: flex-start; line-height: 17px; }
.sheets .on { margin-left: 21px; padding: 0 8px; background: #fff; color: #217346; font-weight: 700; border-bottom: 1px solid #217346; }
.sheets .off { padding: 0 4px 0 8px; }
.sheets .sep { background: #ababab; }
.add { margin-left: 20px; }
.sheets .dots { margin-left: auto; }
.hscroll { flex: 0 0 358px; height: 10px; margin-left: 9px; display: flex; }
.hscroll button { width: 11px; background: #fff; border: 1px solid #ababab; }
.hscroll .track { padding-right: 23px; }
.hscroll i { height: 10px; }

/* status bar */
.status { flex: none; height: 16px; display: flex; align-items: center; background: #f3f2f1; font-size: 8px; padding-right: 6px; }
.ready { padding: 0 11px 0 6px; }
.status > svg { margin-right: 3px; }
.views { margin-left: auto; display: flex; height: 100%; }
.views button { width: 28px; }
.step { margin: 0 3px; }
.status input { appearance: none; width: 70px; height: 12px; background: linear-gradient(#999, #999) center / 100% 1px no-repeat; }
.status input::-webkit-slider-thumb { appearance: none; width: 4px; height: 8px; background: #666; }
.pct { margin-left: 5px; }

/* taskbar */
.taskbar { flex: none; height: 28px; display: flex; align-items: stretch; background: linear-gradient(90deg, #1c2326, #272626 45%, #362a27 70%, #211d1e 90%); color: #fff; }
.start { width: 34px; }
.tsearch { flex: 0 1 202px; min-width: 0; display: flex; align-items: center; gap: 8px; padding: 0 2px 0 8px; background: #f1f1f1; color: #444; font-size: 10px; }
.tsearch input { flex: 1; width: 0; }
.apps { flex: 0 0 311px; display: flex; justify-content: space-between; }
.apps button { position: relative; width: 34px; }
.apps .run::before { content: ""; position: absolute; left: 3px; right: 3px; bottom: 0; height: 2px; background: #76b9ed; }
.apps .active { background: #4a4747; }
.apps .active::before { left: 0; right: 0; }
em { position: absolute; font-style: normal; font-weight: 600; font-size: 8px; line-height: 10px; }
.apps em { left: 21px; top: 13px; }
.tray { margin-left: auto; display: flex; align-items: center; gap: 6px; padding-right: 12px; }
.weather { margin-right: 8px; }
.tray time { text-align: center; font-size: 8px; }
.notif { position: relative; margin-left: 4px; }
.notif em { left: 10px; top: 6px; }
```
